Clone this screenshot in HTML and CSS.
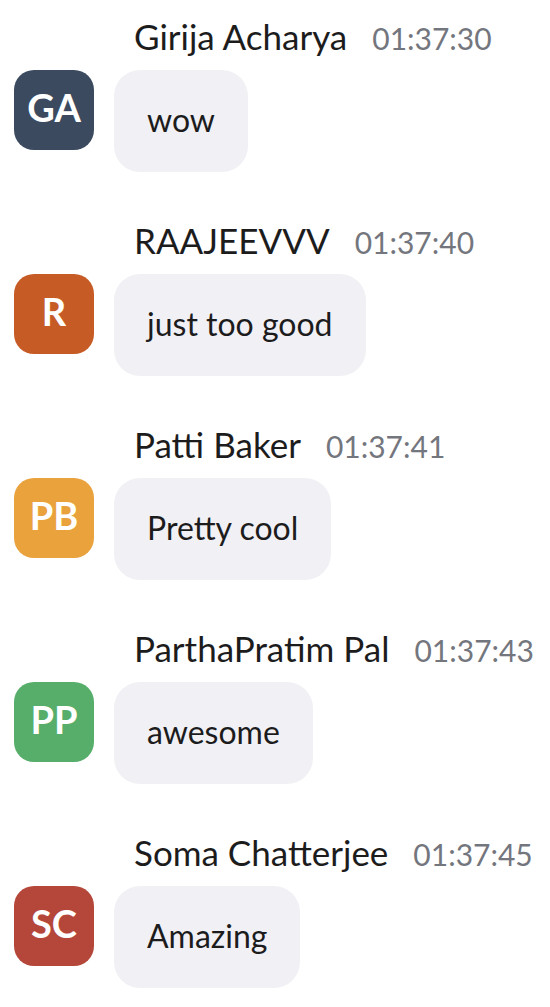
FILE: index.html
```html
<!DOCTYPE html>
<html lang="en">
<head>
<meta charset="utf-8">
<title>Chat</title>
<link rel="stylesheet" href="styles.css">
</head>
<body>
<div class="chat">
  <div class="msg">
    <div class="head"><span class="name">Girija Acharya</span><span class="time">01:37:30</span></div>
    <div class="avatar av-ga">GA</div>
    <div class="bubble">wow</div>
  </div>
  <div class="msg">
    <div class="head"><span class="name">RAAJEEVVV</span><span class="time">01:37:40</span></div>
    <div class="avatar av-r">R</div>
    <div class="bubble">just too good</div>
  </div>
  <div class="msg">
    <div class="head"><span class="name">Patti Baker</span><span class="time">01:37:41</span></div>
    <div class="avatar av-pb">PB</div>
    <div class="bubble">Pretty cool</div>
  </div>
  <div class="msg">
    <div class="head"><span class="name">ParthaPratim Pal</span><span class="time">01:37:43</span></div>
    <div class="avatar av-pp">PP</div>
    <div class="bubble">awesome</div>
  </div>
  <div class="msg">
    <div class="head"><span class="name">Soma Chatterjee</span><span class="time">01:37:45</span></div>
    <div class="avatar av-sc">SC</div>
    <div class="bubble">Amazing</div>
  </div>
</div>
</body>
</html>
```
FILE: styles.css
```css
html, body {
  margin: 0;
  padding: 0;
  background: #ffffff;
}
body {
  font-family: Lato, "Noto Sans", sans-serif;
  color: #1d1c1d;
}
.chat {
  padding: 15px 0 0 14px;
  display: flex;
  flex-direction: column;
  gap: 47px;
}
.msg {
  display: grid;
  grid-template-columns: 80px auto;
  column-gap: 20px;
  row-gap: 13px;
  justify-content: start;
  justify-items: start;
}
.head {
  grid-column: 2;
  grid-row: 1;
  display: flex;
  align-items: baseline;
  gap: 25px;
  height: 42px;
  padding-left: 20px;
  white-space: nowrap;
}
.name {
  font-size: 35px;
  line-height: 42px;
  color: #1d1c1d;
}
.time {
  font-size: 30px;
  line-height: 36px;
  color: #74767e;
}
.avatar {
  grid-column: 1;
  grid-row: 2;
  width: 80px;
  height: 74px;
  padding-bottom: 6px;
  border-radius: 20px;
  display: flex;
  align-items: center;
  justify-content: center;
  color: #ffffff;
  font-weight: 700;
  font-size: 38px;
  line-height: 46px;
}
.av-ga { background: #3b4a5f; }
.av-r { background: #c65b26; }
.av-pb { background: #e9a23c; }
.av-pp { background: #56ae6a; }
.av-sc { background: #b4473a; }
.bubble {
  grid-column: 2;
  grid-row: 2;
  background: #f1f1f5;
  border-radius: 26px;
  padding: 31px 33px 33px;
  font-size: 32px;
  line-height: 38px;
  color: #1d1c1d;
}
```
